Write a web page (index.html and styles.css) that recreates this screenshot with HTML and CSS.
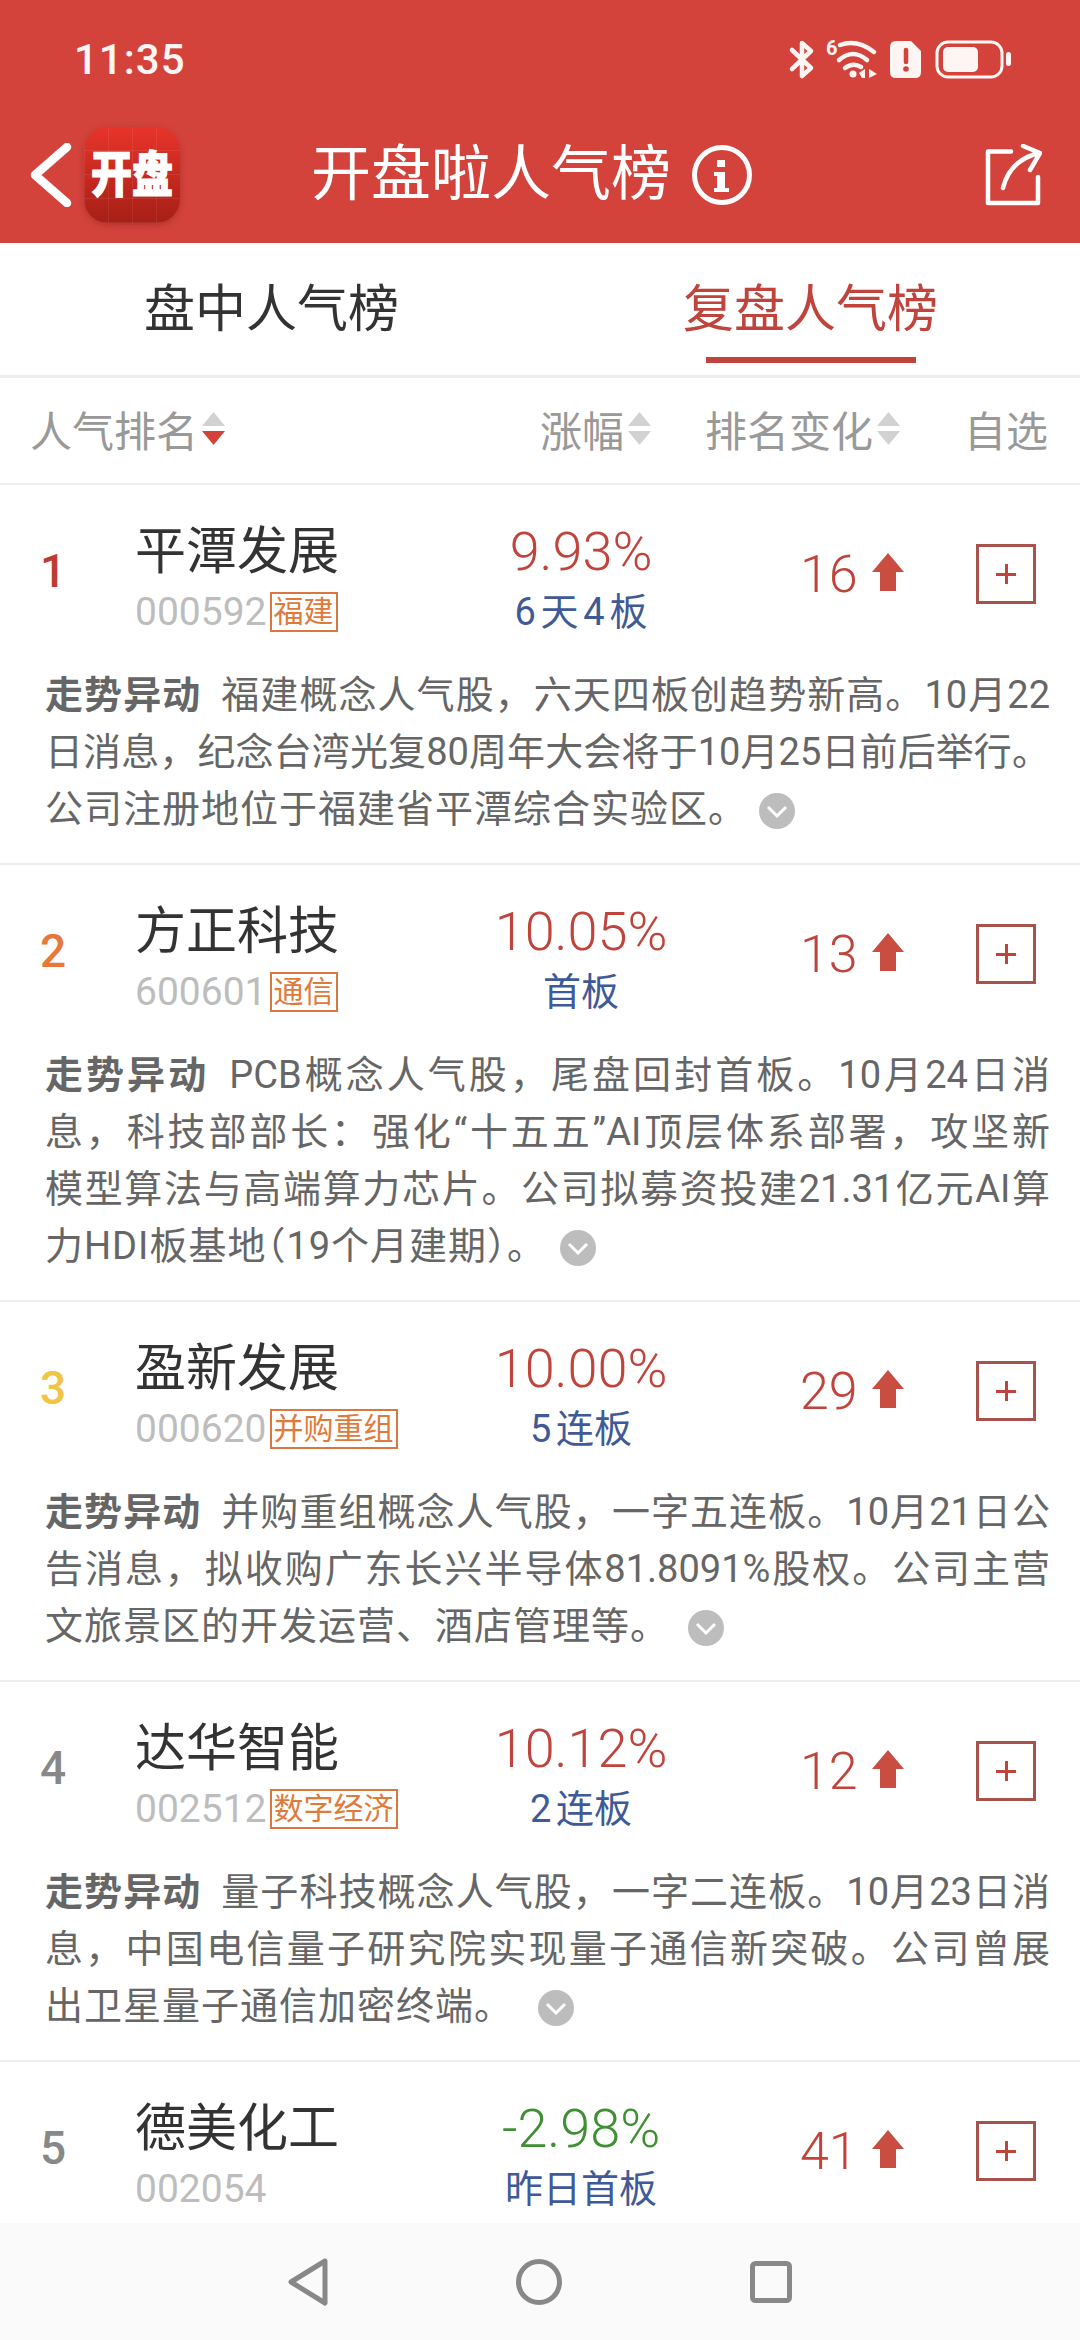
FILE: index.html
```html
<!DOCTYPE html>
<html lang="zh-CN">
<head>
  <meta charset="UTF-8">
  <meta name="viewport" content="width=device-width, initial-scale=1.0">
  <title>开盘啦人气榜</title>
  <link rel="stylesheet" href="styles.css">
</head>
<body>
  <header class="top">
    <div class="status-bar">
      <span class="time">11:35</span>
      <div class="status-icons">
        <svg class="ic-bt" viewBox="788 38 29 43"><path d="M792 50 L811 68 L802 76 V43 L811 51 L792 69" fill="none" stroke="#fff5f3" stroke-width="4.5" stroke-linecap="round" stroke-linejoin="round"/></svg>
        <svg class="ic-wifi" viewBox="824 36 54 44">
          <text x="825" y="55" class="ic-six">6</text>
          <path d="M839 45 Q856 39 873 52 M838 60 Q852 48 866 60 M844 68 Q852 62 860 67" fill="none" stroke="#fff5f3" stroke-width="4.5" stroke-linecap="round"/>
          <circle cx="852" cy="74" r="3.5" fill="#fff5f3"/>
          <path d="M858 73 L864 69 V78 H861 Z M868 69 L876 74 L868 78 Z" fill="#fff5f3"/>
        </svg>
        <svg class="ic-sim" viewBox="888 41 31 37">
          <path d="M894 41 H909 L919 51 V72 Q919 78 913 78 H894 Q888 78 888 72 V47 Q888 41 894 41 Z" fill="#fff5f3"/>
          <path d="M904 50 V62" stroke="#d3433c" stroke-width="4.5" stroke-linecap="round"/>
          <circle cx="904" cy="69" r="2.8" fill="#d3433c"/>
        </svg>
        <svg class="ic-battery" viewBox="933 40 77 39">
          <rect x="935" y="42" width="65" height="35" rx="11" fill="none" stroke="#fff5f3" stroke-width="3"/>
          <rect x="941" y="47" width="35" height="25" rx="5" fill="#fff5f3"/>
          <rect x="1004" y="52" width="5" height="14" rx="2.5" fill="#fff5f3"/>
        </svg>
      </div>
    </div>
    <div class="nav-row">
      <svg class="back" viewBox="0 0 42 64"><path d="M37 4 L5 32 L37 60" fill="none" stroke="#fff" stroke-width="8.5" stroke-linecap="round" stroke-linejoin="round"/></svg>
      <div class="logo"><span>开盘</span></div>
      <h1 class="title">开盘啦人气榜</h1>
      <svg class="info" viewBox="691 145 60 60">
        <circle cx="721" cy="175" r="27.5" fill="none" stroke="#fff" stroke-width="5"/>
        <rect x="716" y="160" width="8" height="7" fill="#fff"/>
        <path d="M713 172 H724 V188 H728 V192 H713 V188 H716 V176 H713 Z" fill="#fff"/>
      </svg>
      <svg class="share" viewBox="985 144 57 62">
        <path d="M1011 151.5 H988 V203 H1038 V177" fill="none" stroke="#fff" stroke-width="4.5" stroke-linecap="round" stroke-linejoin="round"/>
        <path d="M1003 188 Q1010 160 1039 153 M1023 146 L1040 153 L1030 170" fill="none" stroke="#fff" stroke-width="4.5" stroke-linecap="round" stroke-linejoin="round"/>
      </svg>
    </div>
  </header>

  <div class="tabs">
    <div class="tab">盘中人气榜</div>
    <div class="tab active">复盘人气榜</div>
  </div>

  <div class="sort-head">
    <div class="sort-item sort-rank">人气排名
      <svg class="caret" viewBox="0 0 23 33"><path d="M11.5 0 L23 14 H0 Z" fill="#d2d2d2"/><path d="M0 19 H23 L11.5 33 Z" fill="#d3433c"/></svg>
    </div>
    <div class="sort-item">涨幅
      <svg class="caret" viewBox="0 0 23 33"><path d="M11.5 0 L23 14 H0 Z" fill="#d2d2d2"/><path d="M0 19 H23 L11.5 33 Z" fill="#d2d2d2"/></svg>
    </div>
    <div class="sort-item sort-change">排名变化
      <svg class="caret" viewBox="0 0 23 33"><path d="M11.5 0 L23 14 H0 Z" fill="#d2d2d2"/><path d="M0 19 H23 L11.5 33 Z" fill="#d2d2d2"/></svg>
    </div>
    <div class="sort-item sort-pick">自选</div>
  </div>

  <main class="list">
    <section class="row">
      <div class="row-top">
        <div class="rank rank-1">1</div>
        <div class="stock">
          <div class="name">平潭发展</div>
          <div class="code-line"><span class="code">000592</span><span class="tag">福建</span></div>
        </div>
        <div class="quote">
          <div class="pct up">9.93%</div>
          <div class="board">6天4板</div>
        </div>
        <div class="change">16<svg class="up-arrow" viewBox="0 0 32 38"><path d="M16 0 L32 19 H24 V38 H8 V19 H0 Z" fill="#c94e41"/></svg></div>
        <div class="add"></div>
      </div>
      <div class="desc">
        <div class="line"><b>走势异动</b>福建概念人气股，六天四板创趋势新高。10月22</div>
        <div class="line">日消息，纪念台湾光复80周年大会将于10月25日前后举行。</div>
        <div class="line">公司注册地位于福建省平潭综合实验区。<svg class="more" viewBox="0 0 36 36"><circle cx="18" cy="18" r="18" fill="#bdbdbd"/><path d="M9 14 L18 23 L27 14" fill="none" stroke="#fff" stroke-width="3"/></svg></div>
      </div>
    </section>

    <section class="row">
      <div class="row-top">
        <div class="rank rank-2">2</div>
        <div class="stock">
          <div class="name">方正科技</div>
          <div class="code-line"><span class="code">600601</span><span class="tag">通信</span></div>
        </div>
        <div class="quote">
          <div class="pct up">10.05%</div>
          <div class="board">首板</div>
        </div>
        <div class="change">13<svg class="up-arrow" viewBox="0 0 32 38"><path d="M16 0 L32 19 H24 V38 H8 V19 H0 Z" fill="#c94e41"/></svg></div>
        <div class="add"></div>
      </div>
      <div class="desc">
        <div class="line"><b>走势异动</b>PCB概念人气股，尾盘回封首板。10月24日消</div>
        <div class="line">息，科技部部长：强化“十五五”AI顶层体系部署，攻坚新</div>
        <div class="line">模型算法与高端算力芯片。公司拟募资投建21.31亿元AI算</div>
        <div class="line">力HDI板基地<span class="halt">（</span>19个月建期）。<svg class="more" viewBox="0 0 36 36"><circle cx="18" cy="18" r="18" fill="#bdbdbd"/><path d="M9 14 L18 23 L27 14" fill="none" stroke="#fff" stroke-width="3"/></svg></div>
      </div>
    </section>

    <section class="row">
      <div class="row-top">
        <div class="rank rank-3">3</div>
        <div class="stock">
          <div class="name">盈新发展</div>
          <div class="code-line"><span class="code">000620</span><span class="tag">并购重组</span></div>
        </div>
        <div class="quote">
          <div class="pct up">10.00%</div>
          <div class="board">5连板</div>
        </div>
        <div class="change">29<svg class="up-arrow" viewBox="0 0 32 38"><path d="M16 0 L32 19 H24 V38 H8 V19 H0 Z" fill="#c94e41"/></svg></div>
        <div class="add"></div>
      </div>
      <div class="desc">
        <div class="line"><b>走势异动</b>并购重组概念人气股，一字五连板。10月21日公</div>
        <div class="line">告消息，拟收购广东长兴半导体81.8091%股权。公司主营</div>
        <div class="line">文旅景区的开发运营、酒店管理等。<svg class="more" viewBox="0 0 36 36"><circle cx="18" cy="18" r="18" fill="#bdbdbd"/><path d="M9 14 L18 23 L27 14" fill="none" stroke="#fff" stroke-width="3"/></svg></div>
      </div>
    </section>

    <section class="row">
      <div class="row-top">
        <div class="rank">4</div>
        <div class="stock">
          <div class="name">达华智能</div>
          <div class="code-line"><span class="code">002512</span><span class="tag">数字经济</span></div>
        </div>
        <div class="quote">
          <div class="pct up">10.12%</div>
          <div class="board">2连板</div>
        </div>
        <div class="change">12<svg class="up-arrow" viewBox="0 0 32 38"><path d="M16 0 L32 19 H24 V38 H8 V19 H0 Z" fill="#c94e41"/></svg></div>
        <div class="add"></div>
      </div>
      <div class="desc">
        <div class="line"><b>走势异动</b>量子科技概念人气股，一字二连板。10月23日消</div>
        <div class="line">息，中国电信量子研究院实现量子通信新突破。公司曾展</div>
        <div class="line">出卫星量子通信加密终端。<svg class="more" viewBox="0 0 36 36"><circle cx="18" cy="18" r="18" fill="#bdbdbd"/><path d="M9 14 L18 23 L27 14" fill="none" stroke="#fff" stroke-width="3"/></svg></div>
      </div>
    </section>

    <section class="row">
      <div class="row-top">
        <div class="rank">5</div>
        <div class="stock">
          <div class="name">德美化工</div>
          <div class="code-line"><span class="code">002054</span></div>
        </div>
        <div class="quote">
          <div class="pct down">-2.98%</div>
          <div class="board">昨日首板</div>
        </div>
        <div class="change">41<svg class="up-arrow" viewBox="0 0 32 38"><path d="M16 0 L32 19 H24 V38 H8 V19 H0 Z" fill="#c94e41"/></svg></div>
        <div class="add"></div>
      </div>
    </section>
  </main>

  <footer class="sys-nav">
    <svg class="sys-back" viewBox="0 0 40 48"><path d="M37 3 L3 24 L37 45 Z" fill="none" stroke="#888" stroke-width="5" stroke-linejoin="round"/></svg>
    <svg class="sys-home" viewBox="0 0 46 46"><circle cx="23" cy="23" r="20.5" fill="none" stroke="#888" stroke-width="5"/></svg>
    <svg class="sys-recent" viewBox="0 0 42 42"><rect x="2.5" y="2.5" width="37" height="37" rx="3" fill="none" stroke="#888" stroke-width="5"/></svg>
  </footer>
</body>
</html>
```

FILE: styles.css
```css
:root {
  --red: #d3433c;
  --rise: #c0443c;
  --blue: #3f5a96;
  --line: #eeeeee;
}

* {
  box-sizing: border-box;
}

html, body {
  height: 100%;
}

body {
  margin: 0;
  height: 2340px;
  overflow: hidden;
  display: flex;
  flex-direction: column;
  background: white;
  font-family: Roboto, "Noto Sans CJK SC", sans-serif;
  color: #333;
}

/* header */
.top {
  background: var(--red);
  color: white;
  height: 243px;
  flex: none;
}

.status-bar {
  height: 100px;
  padding: 38px 68px 0 74px;
  display: flex;
  justify-content: space-between;
  align-items: flex-start;
}

.time {
  font-size: 42px;
  line-height: 44px;
  font-weight: 500;
  letter-spacing: 1px;
  color: #fff5f3;
}

.status-icons {
  display: flex;
  align-items: flex-start;
  gap: 8px;
}

.ic-bt { width: 29px; height: 43px; }
.ic-wifi { width: 54px; height: 44px; margin-top: -2px; }
.ic-sim { width: 31px; height: 37px; margin: 3px 0 0 3px; }
.ic-battery { width: 77px; height: 39px; margin: 2px 0 0 6px; }

.ic-six {
  font-size: 20px;
  font-weight: 700;
  fill: #fff5f3;
}

.nav-row {
  height: 143px;
  display: flex;
  align-items: center;
  padding: 7px 38px 0 30px;
}

.back {
  width: 42px;
  height: 64px;
}

.logo {
  width: 96px;
  height: 96px;
  margin-left: 12px;
  border-radius: 24px;
  display: flex;
  align-items: center;
  justify-content: center;
  background:
    repeating-linear-gradient(90deg, rgba(255,255,255,0.07) 0 1px, transparent 1px 24px),
    repeating-linear-gradient(0deg, rgba(255,255,255,0.07) 0 1px, transparent 1px 24px),
    linear-gradient(180deg, #e8342a, #a61f16);
  box-shadow: 0 2px 6px rgba(120,20,15,0.35);
}

.logo span {
  font-size: 41px;
  font-weight: 900;
  line-height: 1;
  color: white;
  -webkit-text-stroke: 1px white;
  transform: scaleY(1.2);
}

.title {
  margin: 0 0 0 131px;
  font-size: 60px;
  font-weight: 400;
  line-height: 70px;
  white-space: nowrap;
}

.info {
  width: 60px;
  height: 60px;
  margin-left: 21px;
}

.share {
  width: 57px;
  height: 62px;
  margin-left: auto;
}

/* tabs */
.tabs {
  height: 135px;
  flex: none;
  display: flex;
  padding-left: 2px;
  border-bottom: 3px solid var(--line);
}

.tab {
  flex: 1;
  padding-top: 20px;
  text-align: center;
  font-size: 51px;
  line-height: 94px;
  color: #333;
}

.tab.active {
  color: var(--rise);
}

.tab.active::after {
  content: "";
  display: block;
  width: 210px;
  height: 6px;
  margin: 0 auto;
  background: var(--rise);
}

/* sort header */
.sort-head {
  height: 107px;
  flex: none;
  padding: 0 32px 5px 30px;
  display: flex;
  align-items: center;
  border-bottom: 2px solid var(--line);
  font-size: 42px;
  color: #999;
}

.sort-item {
  display: flex;
  align-items: center;
  white-space: nowrap;
}

.sort-rank {
  margin-right: auto;
}

.sort-change {
  margin-left: 54px;
}

.sort-pick {
  margin-left: 64px;
}

.caret {
  width: 23px;
  height: 33px;
  margin-left: 4px;
}

/* list */
.list {
  flex: 1;
  overflow: hidden;
}

.row {
  padding: 37px 30px 25px 0;
  border-bottom: 2px solid var(--line);
}

.row-top {
  display: flex;
  align-items: center;
}

.rank {
  width: 135px;
  margin-bottom: 12px;
  padding-left: 40px;
  font-size: 46px;
  font-weight: 500;
  color: #888;
}

.rank-1 { color: #bf3a30; }
.rank-2 { color: #e8773a; }
.rank-3 { color: #f2c445; }

.stock {
  width: 333px;
}

.name {
  font-size: 51px;
  line-height: 60px;
  color: #333;
}

.code-line {
  display: flex;
  align-items: center;
  height: 40px;
  margin-top: 10px;
}

.code {
  font-size: 39px;
  color: #bdbdbd;
}

.tag {
  margin-left: 3px;
  padding: 0 2px;
  height: 40px;
  border: 2px solid #d9773f;
  font-size: 30px;
  line-height: 35px;
  color: #e07a3a;
}

.quote {
  width: 224px;
  padding-left: 2px;
  text-align: center;
}

.pct {
  font-size: 54px;
  font-weight: 300;
  line-height: 60px;
}

.up { color: var(--rise); }
.down { color: #3f8f35; }

.board {
  height: 40px;
  margin-top: 10px;
  font-size: 38px;
  line-height: 40px;
  color: var(--blue);
  text-autospace: normal;
  white-space: nowrap;
}

.change {
  width: 284px;
  margin-bottom: 6px;
  padding-left: 108px;
  display: flex;
  align-items: center;
  font-size: 52px;
  font-weight: 300;
  color: var(--rise);
}

.up-arrow {
  width: 32px;
  height: 38px;
  margin: -4px 0 0 14px;
}

.add {
  position: relative;
  width: 60px;
  height: 60px;
  margin-bottom: 6px;
  border: 3px solid #a8524c;
}

.add::before,
.add::after {
  content: "";
  position: absolute;
  background: var(--rise);
}

.add::before {
  left: 17px;
  right: 17px;
  top: 26px;
  height: 3px;
}

.add::after {
  top: 17px;
  bottom: 17px;
  left: 26px;
  width: 3px;
}

.desc {
  margin: 35px 0 0 45px;
  font-size: 38px;
  line-height: 57px;
  color: #666;
}

.desc b {
  margin-right: 20px;
  font-weight: 700;
}

.line {
  text-align: justify;
  text-align-last: justify;
}

.line:last-child {
  text-align-last: left;
  letter-spacing: 1px;
}

.halt {
  font-feature-settings: "halt";
}

.more {
  width: 36px;
  height: 36px;
  margin-left: 19px;
  vertical-align: -7px;
}

.row:nth-child(1) .more { margin-left: 12px; }
.row:nth-child(2) .more { margin-left: 14px; }
.row:nth-child(4) .more { margin-left: 25px; }

/* android nav bar */
.sys-nav {
  height: 117px;
  flex: none;
  background: #fafafa;
  display: flex;
  align-items: center;
  justify-content: center;
  gap: 188px;
}

.sys-back { width: 40px; height: 48px; }
.sys-home { width: 46px; height: 46px; }
.sys-recent { width: 42px; height: 42px; }
```
